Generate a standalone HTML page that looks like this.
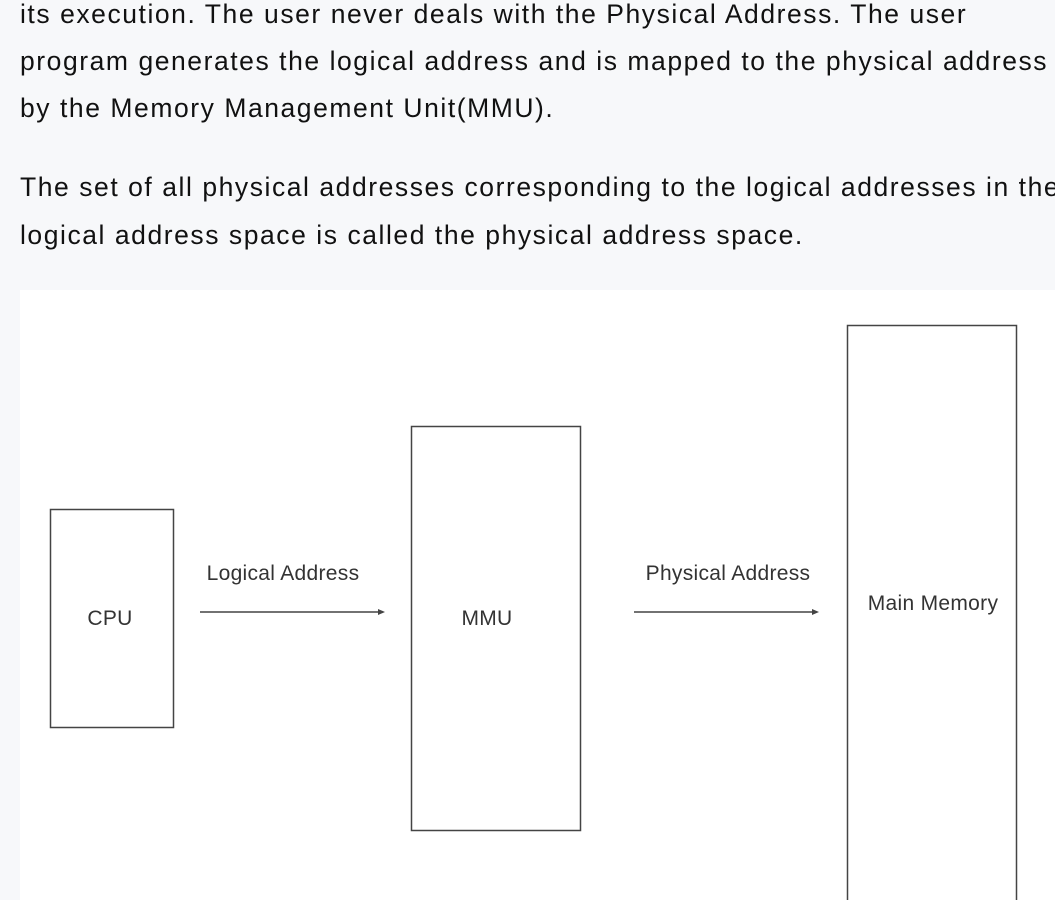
<!DOCTYPE html>
<html><head><meta charset="utf-8"><style>
html,body{margin:0;padding:0;width:1055px;height:900px;overflow:hidden;background:#f7f8fa}
.t{position:absolute;left:20px;font-family:"Liberation Sans",sans-serif;font-size:26.5px;letter-spacing:1.55px;color:#111;white-space:nowrap;line-height:30px}
svg{position:absolute;left:0;top:0}
</style></head><body>
<div class="t" style="top:-1px">its execution. The user never deals with the Physical Address. The user</div>
<div class="t" style="top:46px">program generates the logical address and is mapped to the physical address</div>
<div class="t" style="top:93px">by the Memory Management Unit(MMU).</div>
<div class="t" style="top:172px">The set of all physical addresses corresponding to the logical addresses in the</div>
<div class="t" style="top:220px">logical address space is called the physical address space.</div>
<svg width="1055" height="900" font-family="Liberation Sans, Arial, sans-serif" font-size="21" letter-spacing="0.3" fill="#333">
<rect x="20" y="290" width="1035" height="610" fill="#fff"/>
<g fill="none" stroke="#444" stroke-width="1.5">
<rect x="50.5" y="509.5" width="123" height="218"/>
<rect x="411.5" y="426.5" width="169" height="404"/>
<rect x="847.5" y="325.5" width="169" height="600"/>
<line x1="200" y1="612" x2="380" y2="612"/>
<line x1="634" y1="612" x2="814" y2="612"/>
</g>
<path d="M378 609l7 3l-7 3z M812 609l7 3l-7 3z" fill="#444"/>
<text x="283" y="580" text-anchor="middle">Logical Address</text>
<text x="728" y="580" text-anchor="middle">Physical Address</text>
<text x="110" y="625" text-anchor="middle">CPU</text>
<text x="487" y="625" text-anchor="middle">MMU</text>
<text x="933" y="610" text-anchor="middle">Main Memory</text>
</svg>
</body></html>
